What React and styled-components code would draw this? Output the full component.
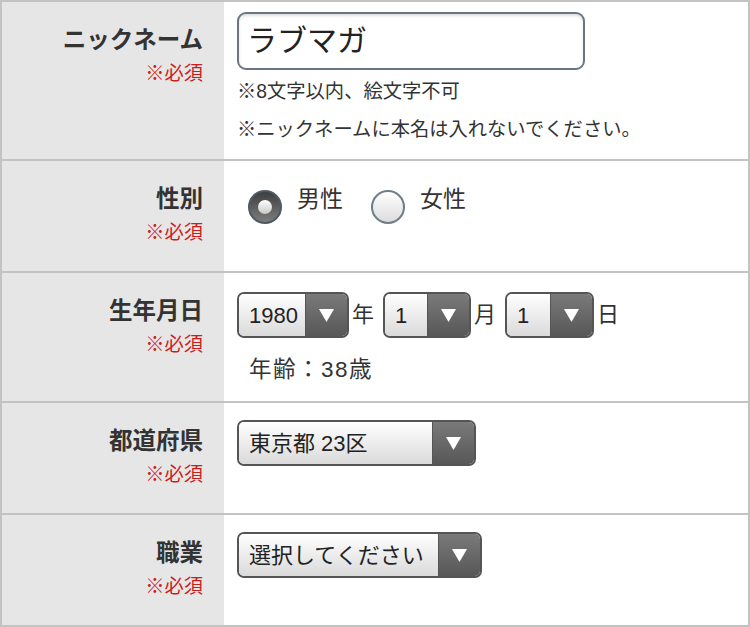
import React from "react";
import styled, { createGlobalStyle } from "styled-components";

const GlobalStyle = createGlobalStyle`
  html, body {
    margin: 0;
    padding: 0;
    background: #fff;
  }
  body {
    font-family: "Liberation Sans", "Noto Sans CJK JP", sans-serif;
    color: #333;
  }
`;

const Form = styled.div`
  width: 750px;
  height: 627px;
  box-sizing: border-box;
  border: 2px solid #c3c3c3;
  display: flex;
  flex-direction: column;
`;

const Row = styled.div`
  display: grid;
  grid-template-columns: 222px 1fr;
  height: ${(p) => p.h}px;
  flex: 0 0 auto;
  border-bottom: ${(p) => (p.last ? "none" : "2px solid #c3c3c3")};
`;

const LabelCell = styled.div`
  background: #e6e6e6;
  text-align: right;
  padding: 24px 21px 0 0;
`;

const LabelText = styled.div`
  font-size: 23.5px;
  line-height: 28px;
  font-weight: bold;
  color: #333;
`;

const Required = styled.div`
  margin-top: 8px;
  font-size: 19.3px;
  line-height: 24px;
  color: #cc1d1d;
`;

const FieldCell = styled.div`
  background: #fff;
  padding: ${(p) => p.pt || 17}px 0 0 13px;
`;

const TextInput = styled.div`
  width: 348px;
  height: 58px;
  box-sizing: border-box;
  border: 2px solid #6b7682;
  border-radius: 9px;
  box-shadow: inset 0 2px 3px rgba(0, 0, 0, 0.12);
  font-size: 30px;
  line-height: 54px;
  padding-left: 8px;
  color: #222;
`;

const Note = styled.div`
  font-size: 19.3px;
  line-height: 38px;
  color: #333;
  margin-top: ${(p) => p.mt || 0}px;
  white-space: nowrap;
`;

const RadioGroup = styled.div`
  display: flex;
  align-items: flex-start;
  padding-top: 7px;
  padding-left: 11px;
`;

const RadioItem = styled.label`
  display: flex;
  align-items: flex-start;
  margin-right: 28px;
`;

const RadioCircle = styled.span`
  width: 34px;
  height: 34px;
  box-sizing: border-box;
  border-radius: 50%;
  margin-top: 5px;
  margin-right: 15px;
  display: flex;
  align-items: center;
  justify-content: center;
  border: 2px solid ${(p) => (p.checked ? "#4f5963" : "#6f7d8a")};
  background: ${(p) =>
    p.checked
      ? "linear-gradient(#3e3e3e, #7d7d7d)"
      : "linear-gradient(#ffffff, #dcdcdc)"};
`;

const RadioDot = styled.span`
  width: 14px;
  height: 14px;
  border-radius: 50%;
  background: linear-gradient(#ffffff, #c8c8c8);
`;

const RadioLabel = styled.span`
  font-size: 23px;
  line-height: 28px;
  color: #333;
`;

const DateLine = styled.div`
  display: flex;
  align-items: center;
`;

const Unit = styled.span`
  font-size: 22px;
  margin: 0 9px 0 3px;
  color: #333;
  position: relative;
  top: -3px;
`;

const Select = styled.div`
  width: ${(p) => p.w}px;
  height: 46px;
  box-sizing: border-box;
  border: 2px solid #555;
  border-radius: 7px;
  overflow: hidden;
  display: flex;
  flex: 0 0 auto;
`;

const SelectValue = styled.div`
  flex: 1;
  background: linear-gradient(#ffffff, #dadada);
  font-size: 22px;
  line-height: 44px;
  padding-left: 10px;
  color: #222;
  white-space: nowrap;
  overflow: hidden;
`;

const SelectArrow = styled.div`
  width: 41px;
  background: linear-gradient(#7a7a7a, #575757);
  border-left: 1px solid #555;
  display: flex;
  align-items: center;
  justify-content: center;
`;

const Age = styled.div`
  font-size: 22.5px;
  line-height: 28px;
  letter-spacing: 1.5px;
  margin: 18px 0 0 12px;
  color: #333;
`;

const Arrow = () => (
  <SelectArrow>
    <svg width="15" height="13" viewBox="0 0 15 13">
      <path d="M0 0 H15 L7.5 13 Z" fill="#fff" />
    </svg>
  </SelectArrow>
);

const Dropdown = ({ w, value }) => (
  <Select w={w}>
    <SelectValue>{value}</SelectValue>
    <Arrow />
  </Select>
);

const Label = ({ children }) => (
  <LabelCell>
    <LabelText>{children}</LabelText>
    <Required>※必須</Required>
  </LabelCell>
);

export default function App() {
  return (
    <>
      <GlobalStyle />
      <Form>
        <Row h={157}>
          <Label>ニックネーム</Label>
          <FieldCell pt={10}>
            <TextInput>ラブマガ</TextInput>
            <Note mt={3}>※8文字以内、絵文字不可</Note>
            <Note>※ニックネームに本名は入れないでください。</Note>
          </FieldCell>
        </Row>
        <Row h={110}>
          <Label>性別</Label>
          <FieldCell pt={17}>
            <RadioGroup>
              <RadioItem>
                <RadioCircle checked>
                  <RadioDot />
                </RadioCircle>
                <RadioLabel>男性</RadioLabel>
              </RadioItem>
              <RadioItem>
                <RadioCircle />
                <RadioLabel>女性</RadioLabel>
              </RadioItem>
            </RadioGroup>
          </FieldCell>
        </Row>
        <Row h={128}>
          <Label>生年月日</Label>
          <FieldCell pt={19}>
            <DateLine>
              <Dropdown w={112} value="1980" />
              <Unit>年</Unit>
              <Dropdown w={88} value="1" />
              <Unit>月</Unit>
              <Dropdown w={89} value="1" />
              <Unit>日</Unit>
            </DateLine>
            <Age>年齢：38歳</Age>
          </FieldCell>
        </Row>
        <Row h={110}>
          <Label>都道府県</Label>
          <FieldCell pt={17}>
            <Dropdown w={239} value="東京都 23区" />
          </FieldCell>
        </Row>
        <Row h={110} last>
          <Label>職業</Label>
          <FieldCell pt={17}>
            <Dropdown w={245} value="選択してください" />
          </FieldCell>
        </Row>
      </Form>
    </>
  );
}
